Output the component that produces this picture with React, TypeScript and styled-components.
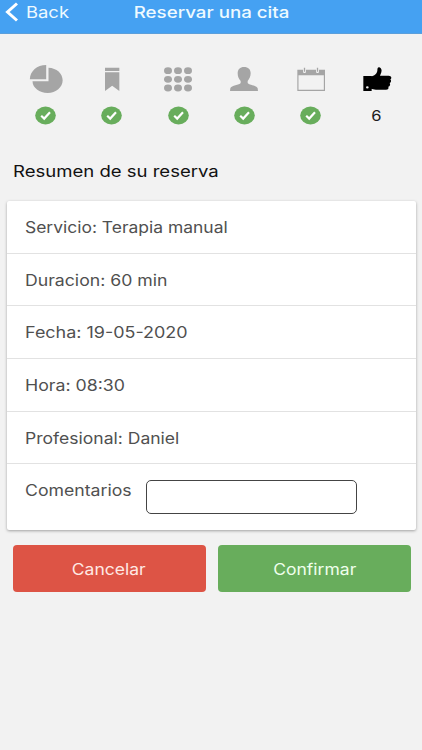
import React from "react";
import styled, { createGlobalStyle } from "styled-components";

const GlobalStyle = createGlobalStyle`
  * { box-sizing: border-box; }
  body {
    margin: 0;
    background: #f2f2f2;
    font-family: Inter, "Liberation Sans", sans-serif;
  }
`;

const Screen = styled.div`
  width: 100%;
  height: 750px;
  overflow: hidden;
  background: #f2f2f2;
`;

const Label = styled.span<{ $origin?: string; $stretch?: number }>`
  display: inline-block;
  white-space: nowrap;
  transform: scaleX(${(p) => p.$stretch ?? 1.14});
  transform-origin: ${(p) => p.$origin ?? "left"} center;
`;

const TopBar = styled.header`
  display: grid;
  grid-template-columns: 1fr auto 1fr;
  align-items: start;
  height: 34px;
  padding-top: 1px;
  background: #45a1f2;
  border-bottom: 1px solid #5b9fdb;
  color: #eefaff;
  font-size: 16px;
  line-height: 22px;
`;

const BackButton = styled.button`
  display: flex;
  align-items: center;
  gap: 7.5px;
  padding: 0 0 0 5px;
  border: 0;
  background: none;
  color: inherit;
  font: inherit;
`;

const Title = styled.h1`
  margin: 0;
  padding-left: 1px;
  font-size: 16px;
  font-weight: 500;
  line-height: 22px;
`;

const Steps = styled.ol`
  display: grid;
  grid-template-columns: repeat(6, 1fr);
  margin: 0;
  padding: 29px 12px 0 12.5px;
  list-style: none;
`;

const Step = styled.li<{ $active?: boolean }>`
  display: flex;
  flex-direction: column;
  align-items: center;
  gap: 10px;
  color: ${(p) => (p.$active ? "#000" : "#a5a5a5")};
`;

const StepIcon = styled.svg`
  width: 40px;
  height: 32px;
  fill: currentColor;
`;

const Check = styled.svg`
  width: 21px;
  height: 20px;
`;

const StepNumber = styled.span`
  height: 20px;
  color: #1c1c1c;
  font-size: 14.5px;
  line-height: 22px;
`;

const Heading = styled.h2`
  margin: 0;
  padding: 33px 12.5px 0;
  color: #111;
  font-size: 16px;
  font-weight: 400;
  line-height: 26px;
`;

const Card = styled.section`
  margin: 17px 6px 0 7px;
  background: #fff;
  border-radius: 2px;
  box-shadow: 0 1px 3px rgba(0, 0, 0, 0.34);
  color: #505050;
  font-size: 15.5px;
`;

const Row = styled.div`
  display: flex;
  align-items: center;
  height: 52.7px;
  padding: 1.4px 0 0 18.4px;
  border-bottom: 1.4px solid #e2e2e2;
`;

const CommentRow = styled.label`
  display: flex;
  align-items: flex-start;
  height: 66px;
  padding: 16px 0 0 18.4px;
`;

const CommentLabel = styled.span`
  width: 120.6px;
  line-height: 22px;
`;

const CommentInput = styled.input`
  width: 211px;
  height: 34px;
  padding: 0 8px;
  border: 1.4px solid #444;
  border-radius: 5px;
  background: #fff;
  font: inherit;
  outline: none;
`;

const Actions = styled.div`
  display: grid;
  grid-template-columns: 1fr 1fr;
  gap: 12px;
  padding: 14.9px 11.2px 0 12.6px;
`;

const ActionButton = styled.button<{ $tone: "danger" | "success" }>`
  height: 47px;
  padding: 1px 0 0;
  border: 0;
  border-radius: 4px;
  background: ${(p) => (p.$tone === "danger" ? "#dd5445" : "#68ad5c")};
  color: ${(p) => (p.$tone === "danger" ? "#ffe9e4" : "#efffec")};
  font-family: inherit;
  font-size: 15.5px;
`;

const PieIcon = () => (
  <>
    <path d="M.5 1H-48.5C-48-24-27-42 .5-42Z" />
    <path d="M7.5 7V-34C32-33 50-17 50 4C50 25 30 42 5 42C-20 42-40 27-40.500 7Z" />
  </>
);

const BookmarkIcon = () => (
  <path d="M-21-34H22V-24H-21ZM-21-20H22V36L.5 20L-21 36Z" />
);

const GridIcon = () => (
  <>
    {[-25, 1, 27].map((y) =>
      [-30, 0, 30].map((x) => (
        <ellipse key={`${x}:${y}`} cx={x} cy={y} rx="12" ry="10.300" />
      )),
    )}
  </>
);

const PersonIcon = () => (
  <path d="M0-36C13-36 20-29 20-17C20-7 16-1 11 6V12C14 19 38 18 41 28L42 36H-42L-41 28C-38 18-13 19-10 12V6C-16-1-19-7-19-17C-19-29-12-36 0-36Z" />
);

const CalendarIcon = () => (
  <>
    <path d="M-41-28H-24V-22C-24-17-15-17-15-22V-28H15V-22C15-17 24-17 24-22V-28H42V36H-41ZM-37.500-11V32.500H38.500V-11Z" fillRule="evenodd" />
    <path d="M-21.500-34H-17.500V-22H-21.500ZM17.500-34H21.500V-22H17.500Z" />
  </>
);

const ThumbIcon = () => (
  <>
    <path d="M-41-9H-16V36H-41ZM-33 25A4 3.500 0 1 0-25 25A4 3.500 0 1 0-33 25Z" fillRule="evenodd" />
    <path d="M-19-8C-8-9 0-16 1-25C1-33 3-36 7-35C13-33 15-27 13-20L9-10H35C44-10 45-1 40 1C44 5 42 11 38 12C41 17 39 22 34 23C36 28 33 32 27 32H-3C-10 32-13 29-19 29Z" />
  </>
);

const steps = [PieIcon, BookmarkIcon, GridIcon, PersonIcon, CalendarIcon, ThumbIcon];

const details = [
  { text: "Servicio: Terapia manual", stretch: 1.126 },
  { text: "Duracion: 60 min", stretch: 1.14 },
  { text: "Fecha: 19-05-2020", stretch: 1.158 },
  { text: "Hora: 08:30", stretch: 1.145 },
  { text: "Profesional: Daniel", stretch: 1.132 },
];

export default function App() {
  return (
    <>
      <GlobalStyle />
      <Screen>
        <TopBar>
          <BackButton>
            <svg width="13" height="20" viewBox="0 0 13 20" fill="none" stroke="#fff" strokeWidth="3">
              <path d="M12 1.500L2.500 10L12 18.500" />
            </svg>
            <Label $stretch={1.15}>Back</Label>
          </BackButton>
          <Title>
            <Label $origin="center" $stretch={1.17}>Reservar una cita</Label>
          </Title>
        </TopBar>
        <Steps>
          {steps.map((Icon, i) => {
            const active = i === steps.length - 1;
            return (
              <Step key={i} $active={active}>
                <StepIcon viewBox="-60 -48 120 96">
                  <Icon />
                </StepIcon>
                {active ? (
                  <StepNumber>
                    <Label $origin="center">6</Label>
                  </StepNumber>
                ) : (
                  <Check viewBox="0 0 21 20">
                    <ellipse cx="10.500" cy="10.500" rx="10.300" ry="9" fill="#68ad5c" />
                    <path d="M6.200 10.800L9.200 13.600L15 7.300" fill="none" stroke="#fff" strokeWidth="2.200" />
                  </Check>
                )}
              </Step>
            );
          })}
        </Steps>
        <Heading>
          <Label $stretch={1.158}>Resumen de su reserva</Label>
        </Heading>
        <Card>
          {details.map(({ text, stretch }) => (
            <Row key={text}>
              <Label $stretch={stretch}>{text}</Label>
            </Row>
          ))}
          <CommentRow>
            <CommentLabel>
              <Label>Comentarios</Label>
            </CommentLabel>
            <CommentInput />
          </CommentRow>
        </Card>
        <Actions>
          <ActionButton $tone="danger">
            <Label $origin="center" $stretch={1.13}>Cancelar</Label>
          </ActionButton>
          <ActionButton $tone="success">
            <Label $origin="center" $stretch={1.13}>Confirmar</Label>
          </ActionButton>
        </Actions>
      </Screen>
    </>
  );
}
